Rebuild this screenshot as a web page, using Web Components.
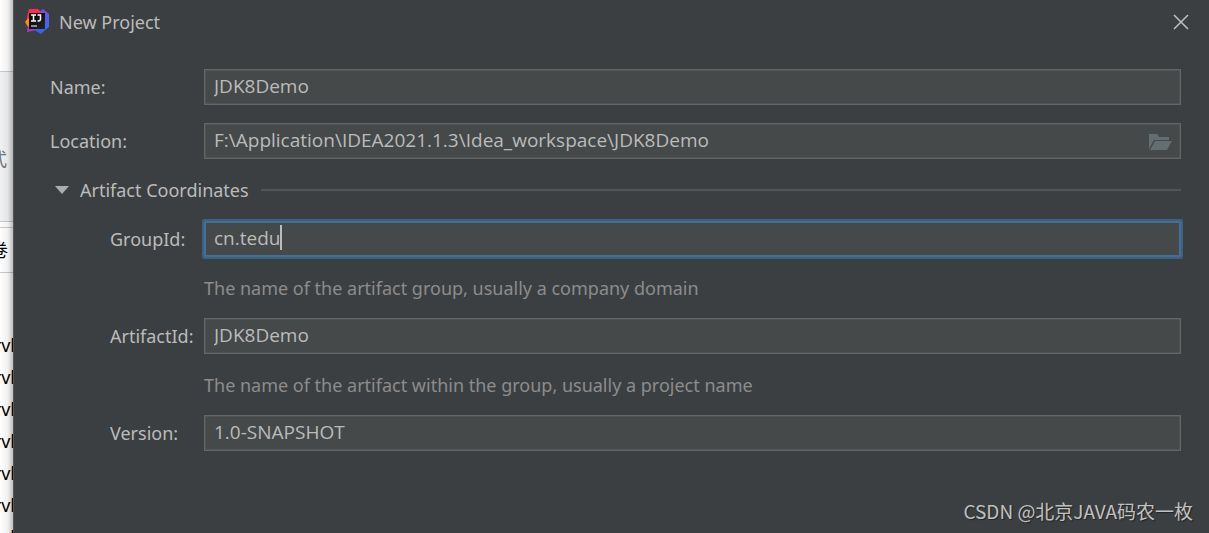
<!DOCTYPE html>
<html lang="en">
<head>
<meta charset="utf-8">
<title>New Project</title>
<style>
html, body { height: 100%; margin: 0; }
body { background: #fff; font: 18px/24px "Noto Sans", "Noto Sans CJK SC", sans-serif; color: #bbbbbb; overflow: hidden; }
</style>
</head>
<body>
<desk-page>
  <page-behind slot="behind"></page-behind>
  <project-dialog heading="New Project">
    <form-field label="Name:" value="JDK8Demo"></form-field>
    <form-field label="Location:" value="F:\Application\IDEA2021.1.3\Idea_workspace\JDK8Demo" browse></form-field>
    <field-group heading="Artifact Coordinates">
      <form-field nested active label="GroupId:" value="cn.tedu" hint="The name of the artifact group, usually a company domain"></form-field>
      <form-field nested label="ArtifactId:" value="JDK8Demo" hint="The name of the artifact within the group, usually a project name"></form-field>
      <form-field nested label="Version:" value="1.0-SNAPSHOT"></form-field>
    </field-group>
    <span slot="credit">CSDN @北京JAVA码农一枚</span>
  </project-dialog>
</desk-page>
<script>
class Base extends HTMLElement {
  connectedCallback() {
    if (this.shadowRoot) return;
    this.attachShadow({ mode: "open" }).innerHTML = this.render();
  }
}

customElements.define("desk-page", class extends Base {
  render() {
    return `<style>
      :host { display: grid; grid-template-columns: 13px minmax(0, 1fr); min-height: 100vh; }
    </style><slot name="behind"></slot><slot></slot>`;
  }
});

customElements.define("page-behind", class extends Base {
  render() {
    return `<style>
      :host { display: block; position: relative; overflow: hidden; height: 100vh; background: #fff; color: #000; box-sizing: border-box; }
      :host::after { content: ""; position: absolute; inset: 0; background: linear-gradient(to right, transparent, rgba(0,0,0,.06) 60%, rgba(0,0,0,.26)); }
      div { display: flex; justify-content: flex-end; align-items: center; box-sizing: border-box; border-bottom: 1px solid #c9cbcd; }
      .top { height: 72px; }
      .tool { height: 150px; background: #f0f2f4; color: #777; padding: 24px 6px 0 0; }
      .gap { height: 6px; }
      .tab { height: 45px; padding-right: 5px; }
      ul { list-style: none; margin: 56px -2px 0 0; padding: 0; }
      li { display: flex; justify-content: flex-end; height: 32px; line-height: 32px; }
    </style>
    <div class="top"></div><div class="tool">式</div><div class="gap"></div><div class="tab">卷</div>
    <ul>${"<li>rvl</li>".repeat(7)}</ul>`;
  }
});

customElements.define("project-dialog", class extends Base {
  render() {
    return `<style>
      :host { display: flex; flex-direction: column; background: #3c3f41; box-sizing: border-box; border-left: 1px solid #55585a; }
      header { display: flex; align-items: center; height: 44px; padding: 0 20px 0 11px; }
      h1 { flex: 1; margin: 0 0 0 8px; font: inherit; }
      button { display: flex; padding: 0; border: 0; background: none; color: #bfc1c2; }
      main { display: flex; flex-direction: column; gap: 18px; padding: 25px 28px 0 36px; }
      footer { display: flex; justify-content: flex-end; margin-top: auto; padding: 0 16px 8px; font: 19px/28px "Noto Sans CJK SC", sans-serif; color: #c0c1c1; text-shadow: 1px 1px 1px #222; }
    </style>
    <header>
      <svg width="26" height="26" viewBox="0 0 26 26" aria-hidden="true">
        <defs>
          <linearGradient id="r" x1="0" y1="0" x2="0.5" y2="1"><stop stop-color="#ff2c54"/><stop offset=".55" stop-color="#f52d66"/><stop offset="1" stop-color="#8b35d0"/></linearGradient>
          <linearGradient id="b" x1="0" y1="0" x2="0" y2="1"><stop stop-color="#7850d8"/><stop offset="1" stop-color="#2179ee"/></linearGradient>
          <linearGradient id="k" x1="0" y1="0" x2="1" y2="1"><stop stop-color="#000"/><stop offset="1" stop-color="#29272c"/></linearGradient>
        </defs>
        <path d="M14 3 18 0 24 5v13l-8 6-8-4Z" fill="url(#b)"/>
        <path d="M4 0h9l5 5-9 15-7 3 1-7-1-8Z" fill="url(#r)"/>
        <path d="M0 13 3 9l3 4v6l-3-1Z" fill="#ff8728"/>
        <path d="M2 23 4 16l8 5Z" fill="#a339c8"/>
        <path d="m8 20 8 5 5-5Z" fill="#3f61e5"/>
        <path d="M4 4h16v16H4Z" fill="url(#k)"/>
        <path d="M6 6h5M8.500 6v6M6 12h5M12.500 6h3v4q0 2-2 2h-1" fill="none" stroke="#fff" stroke-width="1.500"/>
        <path d="M6 17h6" stroke="#ddd" stroke-width="1.200"/>
      </svg>
      <h1>${this.getAttribute("heading")}</h1>
      <button type="button" aria-label="Close"><svg width="16" height="16" viewBox="0 0 16 16"><path d="m1 1 14 14M15 1 1 15" stroke="currentColor" stroke-width="1.500"/></svg></button>
    </header>
    <main><slot></slot></main>
    <footer><slot name="credit"></slot></footer>`;
  }
});

customElements.define("field-group", class extends Base {
  render() {
    return `<style>
      :host { display: block; margin-top: -18px; }
      button { display: flex; align-items: center; width: 100%; height: 62px; padding: 0 0 0 5px; border: 0; background: none; font: inherit; color: inherit; text-align: left; }
      svg { margin-right: 11px; }
      i { flex: 1; height: 2px; margin-left: 12px; background: #525456; }
      section { padding-left: 60px; }
    </style>
    <button type="button" aria-expanded="true"><svg width="14" height="8" viewBox="0 0 14 8"><path d="M0 0h14L7 8Z" fill="#adadad"/></svg><span>${this.getAttribute("heading")}</span><i></i></button>
    <section><slot></slot></section>`;
  }
});

customElements.define("form-field", class extends Base {
  render() {
    const active = this.hasAttribute("active"), hint = this.getAttribute("hint");
    return `<style>
      :host { display: grid; grid-template-columns: 154px minmax(0, 1fr); align-items: center; }
      :host([nested]) { grid-template-columns: 94px minmax(0, 1fr); }
      label { white-space: nowrap; }
      .box { display: flex; align-items: center; position: relative; box-sizing: border-box; height: 36px; border: 1px solid #646666; background: #45494a; box-shadow: inset 0 0 0 1px #505455; }
      :host([active]) .box { border-color: #466d94; box-shadow: 0 0 0 2px #3d6185, inset 0 0 0 1px #466d94; border-radius: 1px; }
      input { flex: 1; min-width: 0; height: 32px; box-sizing: border-box; margin: 0; padding: 0 9px 2px; border: 0; outline: 0; background: none; font: 19px/24px "Open Sans", "Noto Sans", sans-serif; color: inherit; }
      .browse { display: flex; padding: 2px 8px 0 0; border: 0; background: none; }
      .caret { position: absolute; left: 75px; top: 3px; width: 2px; height: 25px; background: #bbb; }
      p { grid-column: 2; display: flex; align-items: center; height: 61px; margin: 0; color: #8c8c8c; white-space: nowrap; }
    </style>
    <label for="f">${this.getAttribute("label")}</label>
    <div class="box"><input id="f" type="text" spellcheck="false" value="${this.getAttribute("value")}">
      ${active ? '<span class="caret"></span>' : ""}
      ${this.hasAttribute("browse") ? '<button class="browse" type="button" aria-label="Browse"><svg width="23" height="18" viewBox="0 0 23 18"><path d="M0 1h8l2 3h10v3H5L0 16Z M6 8h17l-5 9H1Z" fill="#646d72"/></svg></button>' : ""}
    </div>
    ${hint ? `<p>${hint}</p>` : ""}`;
  }
});
</script>
</body>
</html>
